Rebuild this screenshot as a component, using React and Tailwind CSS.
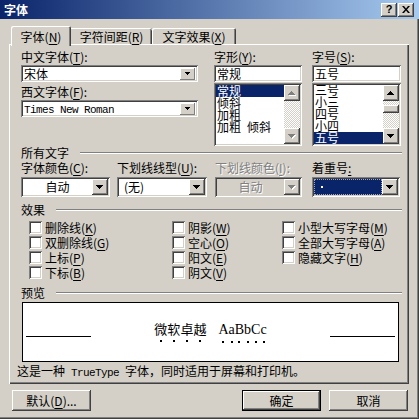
import React from 'react';

const raised = 'shadow-[inset_-1px_-1px_#404040,inset_1px_1px_#ffffff,inset_-2px_-2px_#808080,inset_2px_2px_#d4d0c8]';
const sunken = 'shadow-[inset_1px_1px_#808080,inset_-1px_-1px_#ffffff,inset_2px_2px_#404040,inset_-2px_-2px_#d4d0c8]';
const dither = 'bg-[image:repeating-conic-gradient(#ffffff_0_25%,#d4d0c8_0_50%)] bg-[length:2px_2px]';

function Tri({ size = 7, up = false, disabled = false }) {
  const h = (size + 1) / 2;
  const rows = [];
  for (let i = 0; i < h; i++) {
    const y = up ? h - 1 - i : i;
    if (disabled) rows.push(<rect key={'s' + i} x={i + 1} y={y + 1} width={size - 2 * i} height={1} fill="#ffffff" />);
  }
  for (let i = 0; i < h; i++) {
    const y = up ? h - 1 - i : i;
    rows.push(<rect key={i} x={i} y={y} width={size - 2 * i} height={1} fill={disabled ? '#808080' : '#000000'} />);
  }
  return (
    <svg width={size + 1} height={h + 1} shapeRendering="crispEdges" className="block">
      {rows}
    </svg>
  );
}

function U({ children }) {
  return <span className="underline underline-offset-[2px]">{children}</span>;
}

function Label({ children, disabled }) {
  return (
    <div className={`h-[14px] leading-[14px] whitespace-nowrap ${disabled ? 'text-[#808080] [text-shadow:1px_1px_#ffffff]' : ''}`}>
      {children}
    </div>
  );
}

function TitleBtn({ children }) {
  return (
    <div className={`w-[16px] h-[14px] bg-[#d4d0c8] ${raised} flex items-center justify-center`}>
      {children}
    </div>
  );
}

function SmallCombo({ children }) {
  return (
    <div className={`mt-[1px] h-[17px] flex items-center p-[2px] bg-white ${sunken}`}>
      <div className="flex-1 pl-[1px] leading-[13px] whitespace-nowrap">{children}</div>
      <div className="w-[15px] h-[12px] mr-[1px] bg-[#d4d0c8] shadow-[inset_-1px_-1px_#808080,inset_1px_1px_#ffffff] flex items-center justify-center">
        <Tri size={5} />
      </div>
    </div>
  );
}

function TextBox({ children }) {
  return (
    <div className={`mt-[1px] h-[17px] flex items-center px-[3px] bg-white ${sunken} leading-[13px]`}>
      {children}
    </div>
  );
}

function ListBox({ items, sel, shift, enabled }) {
  return (
    <div className={`mt-[1px] h-[63px] flex p-[2px] bg-white ${sunken}`}>
      <div className="flex-1 overflow-hidden">
        <div className={shift}>
          {items.map((t, i) => (
            <div
              key={i}
              className={`h-[12px] leading-[12px] pl-[1px] flex whitespace-nowrap ${i === sel ? 'bg-[#0a246a] text-white' : ''}`}
            >
              {t}
            </div>
          ))}
        </div>
      </div>
      <div className="w-[16px] flex flex-col">
        <div className={`h-[16px] bg-[#d4d0c8] ${raised} flex items-center justify-center`}>
          <Tri size={7} up disabled={!enabled} />
        </div>
        <div className={`flex-1 ${dither}`}>
          {enabled && <div className={`mt-[4px] h-[8px] bg-[#d4d0c8] ${raised}`} />}
        </div>
        <div className={`h-[16px] bg-[#d4d0c8] ${raised} flex items-center justify-center`}>
          <Tri size={7} disabled={!enabled} />
        </div>
      </div>
    </div>
  );
}

function Drop({ children, disabled, focused, center }) {
  return (
    <div className={`mt-[2px] h-[20px] flex items-center p-[2px] ${sunken} ${disabled ? 'bg-[#d4d0c8]' : 'bg-white'}`}>
      {focused ? (
        <div className="flex-1 h-full bg-[#0a246a] border border-dotted border-white/60 flex items-center">
          <div className="w-[2px] h-[2px] bg-white ml-[6px]" />
        </div>
      ) : (
        <div
          className={`flex-1 h-full flex items-center leading-[14px] whitespace-nowrap ${center ? 'justify-center' : 'pl-[5px]'} ${
            disabled ? 'text-[#808080] [text-shadow:1px_1px_#ffffff]' : ''
          }`}
        >
          {children}
        </div>
      )}
      <div className={`w-[16px] h-[16px] bg-[#d4d0c8] ${raised} flex items-center justify-center`}>
        <Tri size={7} disabled={disabled} />
      </div>
    </div>
  );
}

function Sep({ children }) {
  return (
    <div className="flex items-center h-[14px]">
      <span className="leading-[14px]">{children}</span>
      <div className="flex-1 ml-[11px] h-[2px] border-t border-t-[#808080] border-b border-b-white" />
    </div>
  );
}

function Check({ children }) {
  return (
    <div className="flex items-center h-[15px]">
      <div className={`w-[13px] h-[13px] bg-white ${sunken}`} />
      <span className="ml-[3px] leading-[14px] whitespace-nowrap">{children}</span>
    </div>
  );
}

function Button({ children, def, className = '' }) {
  const edge = def
    ? 'shadow-[inset_0_0_0_1px_#000000,inset_-2px_-2px_#404040,inset_2px_2px_#ffffff,inset_-3px_-3px_#808080]'
    : raised;
  return (
    <div className={`w-[79px] h-[21px] bg-[#d4d0c8] ${edge} flex items-center justify-center leading-[14px] ${className}`}>
      {children}
    </div>
  );
}

// emphasis mark (着重号) under every character
function Dotted({ text, className = '' }) {
  return text.split('').map((c, i) => (
    <span key={i} className={`relative inline-block ${className}`}>
      {c}
      <span className="absolute left-1/2 -ml-[1px] bottom-[-5px] w-[2px] h-[2px] bg-black" />
    </span>
  ));
}

export default function App() {
  return (
    <div className="w-[419px] h-[419px] bg-[#d4d0c8] flex flex-col font-['Noto_Sans_CJK_SC',sans-serif] text-[12px] text-black overflow-hidden">
      {/* title bar */}
      <div className="h-[19px] shrink-0 flex items-center pl-[4px] pr-[5px] bg-[linear-gradient(to_right,#0a246a,#a6caf0)]">
        <span className="text-white font-bold text-[12px] leading-[14px]">字体</span>
        <div className="ml-auto flex gap-[1px]">
          <TitleBtn>
            <span className="font-['Liberation_Sans',sans-serif] font-bold text-[11px] leading-[11px]">?</span>
          </TitleBtn>
          <TitleBtn>
            <svg width="8" height="7" viewBox="0 0 8 7" className="block">
              <path d="M0 0h2l2 2.5 2-2.5h2l-3 3.5 3 3.5h-2l-2-2.5-2 2.5h-2l3-3.5z" fill="#000" />
            </svg>
          </TitleBtn>
        </div>
      </div>

      <div className="flex-1 flex flex-col pl-[9px] pt-[7px] shadow-[inset_-1px_-1px_#404040,inset_-2px_-2px_#808080]">
        {/* tabs */}
        <div className="flex items-end h-[18px] pl-[2px] relative z-10">
          <div className="w-[60px] h-[20px] mb-[-2px] bg-[#d4d0c8] rounded-t-[2px] shadow-[inset_1px_1px_#ffffff,inset_-1px_0_#404040,inset_-2px_0_#808080] flex justify-center pt-[4px] leading-[14px]">
            字体(<U>N</U>)
          </div>
          <div className="w-[81px] h-[16px] rounded-tr-[2px] shadow-[inset_0_1px_#ffffff,inset_-1px_0_#404040,inset_-2px_0_#808080] flex justify-center pt-[2px] leading-[14px]">
            字符间距(<U>R</U>)
          </div>
          <div className="w-[84px] h-[16px] rounded-t-[2px] shadow-[inset_1px_1px_#ffffff,inset_-1px_0_#404040,inset_-2px_0_#808080] flex justify-center pt-[2px] leading-[14px]">
            文字效果(<U>X</U>)
          </div>
        </div>

        {/* panel */}
        <div className="w-[400px] h-[340px] shadow-[inset_1px_1px_#ffffff,inset_-1px_-1px_#404040,inset_-2px_-2px_#808080] pl-[12px] pt-[6px] pr-[7px] flex flex-col">
          <div className="flex">
            <div className="w-[177px]">
              <Label>中文字体(<U>T</U>):</Label>
              <SmallCombo>宋体</SmallCombo>
              <div className="mt-[3px]">
                <Label>西文字体(<U>F</U>):</Label>
              </div>
              <div className="mt-[1px]">
                <SmallCombo>
                  <span className="font-['Liberation_Mono',monospace] text-[11px] tracking-[-0.6px]">Times New Roman</span>
                </SmallCombo>
              </div>
            </div>
            <div className="w-[88px] ml-[16px]">
              <Label>字形(<U>Y</U>):</Label>
              <TextBox>常规</TextBox>
              <ListBox
                items={['常规', '倾斜', '加粗', <><span>加粗</span><span className="ml-[6px]">倾斜</span></>]}
                sel={0}
                shift=""
                enabled={false}
              />
            </div>
            <div className="w-[89px] ml-[10px]">
              <Label>字号(<U>S</U>):</Label>
              <TextBox>五号</TextBox>
              <ListBox items={['三号', '小三', '四号', '小四', '五号']} sel={4} shift="mt-[-1px]" enabled />
            </div>
          </div>

          <Sep>所有文字</Sep>

          <div className="flex mt-[1px]">
            <div className="w-[89px]">
              <Label>字体颜色(<U>C</U>):</Label>
              <Drop center>自动</Drop>
            </div>
            <div className="w-[90px] ml-[7px]">
              <Label>下划线线型(<U>U</U>):</Label>
              <Drop>(无)</Drop>
            </div>
            <div className="w-[87px] ml-[8px]">
              <Label disabled>下划线颜色(<U>I</U>):</Label>
              <Drop center disabled>自动</Drop>
            </div>
            <div className="w-[88px] ml-[10px]">
              <Label>着重号<U>:</U></Label>
              <Drop focused />
            </div>
          </div>

          <div className="mt-[6px]">
            <Sep>效果</Sep>
          </div>

          <div className="flex mt-[3px] pl-[8px]">
            <div className="w-[143px]">
              <Check>删除线(<U>K</U>)</Check>
              <Check>双删除线(<U>G</U>)</Check>
              <Check>上标(<U>P</U>)</Check>
              <Check>下标(<U>B</U>)</Check>
            </div>
            <div className="w-[110px]">
              <Check>阴影(<U>W</U>)</Check>
              <Check>空心(<U>O</U>)</Check>
              <Check>阳文(<U>E</U>)</Check>
              <Check>阴文(<U>V</U>)</Check>
            </div>
            <div>
              <Check>小型大写字母(<U>M</U>)</Check>
              <Check>全部大写字母(<U>A</U>)</Check>
              <Check>隐藏文字(<U>H</U>)</Check>
            </div>
          </div>

          <div className="mt-[6px]">
            <Sep>预览</Sep>
          </div>

          <div className="ml-[1px] mt-[2px] w-[377px] h-[60px] bg-white border border-black flex items-start pt-[18px] px-[3px]">
            <div className="w-[65px] h-px bg-black mt-[15px]" />
            <div className="flex-1 text-center whitespace-nowrap leading-[16px] text-[13px]">
              <Dotted text="微软卓越" />
              <span className="inline-block w-[12px]" />
              <Dotted text="AaBbCc" className="font-['Liberation_Serif',serif] text-[14px]" />
            </div>
            <div className="w-[65px] h-px bg-black mt-[15px]" />
          </div>

          <div className="ml-[-4px] mt-[2px] h-[14px] leading-[14px] whitespace-nowrap">
            这是一种<span className="font-['Liberation_Mono',monospace] text-[11px] tracking-[-0.6px] whitespace-pre"> TrueType </span>字体，同时适用于屏幕和打印机。
          </div>
        </div>

        {/* buttons */}
        <div className="flex mt-[6px] pl-[3px]">
          <Button>默认(<U>D</U>)...</Button>
          <Button def className="ml-[151px]">确定</Button>
          <Button className="ml-[8px]">取消</Button>
        </div>
      </div>
    </div>
  );
}
